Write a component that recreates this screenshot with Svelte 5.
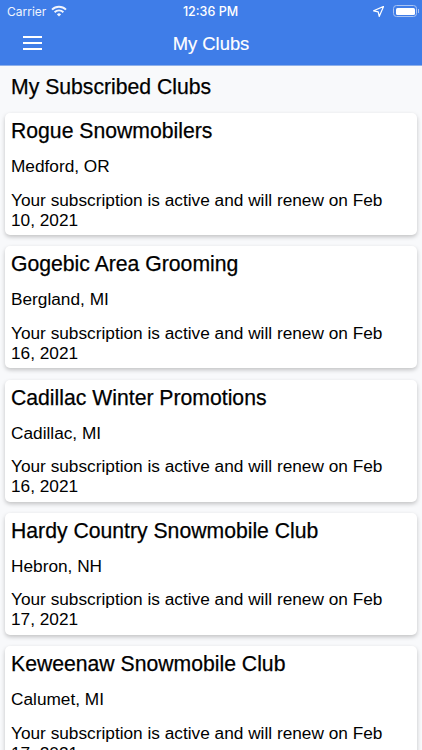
<script>
    const clubs = [
        { name: 'Rogue Snowmobilers', place: 'Medford, OR', renew: 'Feb 10, 2021' },
        { name: 'Gogebic Area Grooming', place: 'Bergland, MI', renew: 'Feb 16, 2021' },
        { name: 'Cadillac Winter Promotions', place: 'Cadillac, MI', renew: 'Feb 16, 2021' },
        { name: 'Hardy Country Snowmobile Club', place: 'Hebron, NH', renew: 'Feb 17, 2021' },
        { name: 'Keweenaw Snowmobile Club', place: 'Calumet, MI', renew: 'Feb 17, 2021' }
    ];
</script>

<div class="page">
    <header>
        <div class="status">
            <div class="carrier">
                <span>Carrier</span>
                <svg width="16" height="12" viewBox="0 0 16 12" fill="none" stroke="#fff" stroke-width="1.9">
                    <path d="M1 4.6a10 10 0 0 1 14 0" />
                    <path d="M3.6 7.2a6.3 6.3 0 0 1 8.8 0" />
                    <path d="M8 11.6 5.9 9.4a3 3 0 0 1 4.2 0z" fill="#fff" stroke="none" />
                </svg>
            </div>
            <span class="time">12:36 PM</span>
            <div class="right">
                <svg width="11" height="11" viewBox="0 0 11 11"><path d="M10.6.4 6.2 10.4 5.2 5.8.6 4.8z" fill="none" stroke="#fff" stroke-width="1.2" stroke-linejoin="round" /></svg>
                <div class="battery"><div class="level"></div></div>
                <div class="nub"></div>
            </div>
        </div>
        <div class="bar">
            <button class="menu" aria-label="Menu">
                <span></span><span></span><span></span>
            </button>
            <div class="title">My Clubs</div>
        </div>
    </header>

    <h1>My Subscribed Clubs</h1>

    <div class="list">
        {#each clubs as club}
            <div class="card">
                <h2>{club.name}</h2>
                <p>{club.place}</p>
                <p>Your subscription is active and will renew on {club.renew}</p>
            </div>
        {/each}
    </div>
</div>

<style>
    :global(body) {
        margin: 0;
        background: #f8f9fb;
    }

    .page {
        height: 750px;
        overflow: hidden;
        font-family: "Liberation Sans", Arial, sans-serif;
        color: #000;
    }

    header {
        background: #3f7de8;
        color: #fff;
        height: 65px;
        border-bottom: 1px solid #8eb0ea;
    }

    .status {
        height: 22px;
        display: grid;
        grid-template-columns: 1fr auto 1fr;
        align-items: center;
        padding: 0 3px 0 7px;
        font-family: Inter, sans-serif;
        font-size: 12px;
    }

    .carrier {
        display: flex;
        align-items: center;
        gap: 5px;
        opacity: 0.92;
    }

    .time {
        font-size: 12.5px;
        font-weight: 500;
        margin-right: 5px;
    }

    .right {
        display: flex;
        justify-content: flex-end;
        align-items: center;
    }

    .right svg {
        margin-right: 9px;
    }

    .battery {
        box-sizing: border-box;
        width: 24px;
        height: 12px;
        border: 1px solid #a9c4f3;
        border-radius: 3.5px;
        padding: 1.5px;
    }

    .level {
        height: 100%;
        background: #fff;
        border-radius: 1.5px;
    }

    .nub {
        width: 1px;
        height: 4px;
        margin-left: 1px;
        background: #a9c4f3;
    }

    .bar {
        height: 43px;
        display: flex;
        align-items: center;
        position: relative;
        justify-content: center;
    }

    .menu {
        position: absolute;
        left: 23px;
        top: 14px;
        width: 19px;
        display: flex;
        flex-direction: column;
        gap: 4px;
        background: none;
        border: none;
        padding: 0;
    }

    .menu span {
        height: 2px;
        background: #fff;
    }

    .title {
        font-size: 18.4px;
        font-weight: 500;
        -webkit-text-stroke: 0.15px #fff;
    }

    h1 {
        margin: 0;
        padding: 9px 11px 0;
        height: 38px;
        font-size: 21.2px;
        line-height: 24px;
        font-weight: 400;
        -webkit-text-stroke: 0.25px #000;
    }

    .list {
        display: flex;
        flex-direction: column;
        gap: 11.3px;
        padding: 0 5px;
    }

    .card {
        background: #fff;
        border-radius: 5px;
        box-shadow: 0 2px 4px rgba(0, 0, 0, 0.22);
        padding: 6px;
        height: 110px;
    }

    h2 {
        margin: 0 0 13px;
        font-size: 21.2px;
        line-height: 24px;
        font-weight: 400;
        -webkit-text-stroke: 0.25px #000;
    }

    p {
        margin: 0 0 13.5px;
        font-size: 17.25px;
        line-height: 20px;
    }
</style>
